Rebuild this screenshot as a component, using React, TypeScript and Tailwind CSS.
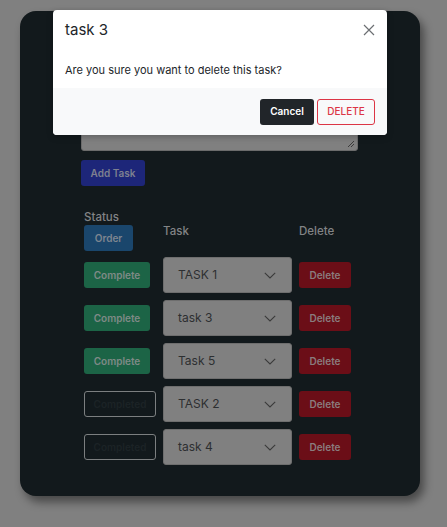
import React from "react";

const rows = [
  { status: "Complete", task: "TASK 1" },
  { status: "Complete", task: "task 3" },
  { status: "Complete", task: "Task 5" },
  { status: "Completed", task: "TASK 2" },
  { status: "Completed", task: "task 4" },
];

function Chevron() {
  return (
    <svg width="12" height="7" viewBox="0 0 12 7" fill="none">
      <path d="M0.8 0.8l5.2 5.2 5.2-5.2" stroke="#3a3a3a" strokeWidth="1.1" />
    </svg>
  );
}

export default function App() {
  return (
    <div
      className="relative w-[447px] h-[527px] bg-[#808080] overflow-hidden"
      style={{ fontFamily: "Inter, 'Liberation Sans', sans-serif" }}
    >
      <div className="ml-[20px] mt-[11px] w-[400px] h-[485px] rounded-[16px] bg-[#12191c] shadow-[4px_6px_10px_rgba(0,0,0,0.45)] pl-[61px] pt-[90px]">
        <div className="relative w-[277px] h-[50px] bg-[#808080] border border-[#6b6b6b] rounded-[3px]">
          <svg className="absolute right-[2px] bottom-[2px]" width="8" height="8" viewBox="0 0 8 8">
            <path d="M7 1L1 7M7 4L4 7" stroke="#333" strokeWidth="0.9" />
          </svg>
        </div>
        <button className="mt-[9px] w-[64px] h-[26px] rounded-[3px] bg-[#1d2679] text-[#7d8090] text-[10px] font-semibold flex items-center justify-center">
          Add Task
        </button>
        <div className="ml-[3px] mt-[24px] grid grid-cols-[79px_136px_52px]">
          <div className="flex flex-col">
            <span className="text-[11.5px] font-medium text-[#828486] leading-[14px]">Status</span>
            <button className="mt-[1px] w-[49px] h-[26px] rounded-[3px] bg-[#1a466c] text-[#7d8590] text-[10px] font-semibold flex items-center justify-center">
              Order
            </button>
          </div>
          <div className="flex items-center text-[11.5px] font-medium text-[#828486] pt-[2px]">Task</div>
          <div className="flex items-center text-[11.5px] font-medium text-[#828486] pt-[2px]">Delete</div>
        </div>
        <div className="ml-[3px] mt-[6px] flex flex-col gap-[7px]">
          {rows.map((r, i) => (
            <div key={i} className="grid grid-cols-[79px_136px_52px] items-center h-[36px]">
              {r.status === "Complete" ? (
                <button className="w-[66px] h-[26px] rounded-[3px] bg-[#1c6446] text-[#7f8a86] text-[10px] font-semibold flex items-center justify-center">
                  Complete
                </button>
              ) : (
                <button className="w-[72px] h-[26px] rounded-[3px] border border-[#7c7f80] text-[#1c2326] text-[10px] font-semibold flex items-center justify-center">
                  Completed
                </button>
              )}
              <div className="w-[129px] h-[36px] rounded-[3px] bg-[#808080] border border-[#6e6e6e] flex items-center justify-between pl-[14px] pr-[15px]">
                <span className="text-[12px] text-[#2d2f31]">{r.task}</span>
                <Chevron />
              </div>
              <button className="w-[52px] h-[26px] rounded-[3px] bg-[#6b0e17] text-[#8a7c7e] text-[10px] font-semibold flex items-center justify-center">
                Delete
              </button>
            </div>
          ))}
        </div>
      </div>

      <div className="absolute left-[53px] top-[10px] w-[334px] h-[125px] bg-white rounded-[4px] shadow-[0_2px_6px_rgba(0,0,0,0.25)] flex flex-col overflow-hidden">
        <div className="h-[40px] flex items-center justify-between pl-[12px] pr-[12px]">
          <span className="text-[15px] text-[#212529] pt-[1px]">task 3</span>
          <svg width="12" height="12" viewBox="0 0 12 12">
            <path d="M1 1l10 10M11 1L1 11" stroke="#6c6f73" strokeWidth="1.2" />
          </svg>
        </div>
        <div className="h-[38px] flex items-center pl-[12px] pt-[2px]">
          <span className="text-[11px] text-[#212529]">Are you sure you want to delete this task?</span>
        </div>
        <div className="flex-1 bg-[#f8f9fa] flex items-center justify-end gap-[3px] pr-[12px]">
          <button className="w-[54px] h-[26px] rounded-[3px] bg-[#212529] text-white text-[10px] font-semibold flex items-center justify-center">
            Cancel
          </button>
          <button className="w-[58px] h-[26px] rounded-[3px] border border-[#dc3545] text-[#dc3545] text-[10px] font-medium flex items-center justify-center">
            DELETE
          </button>
        </div>
      </div>
    </div>
  );
}
